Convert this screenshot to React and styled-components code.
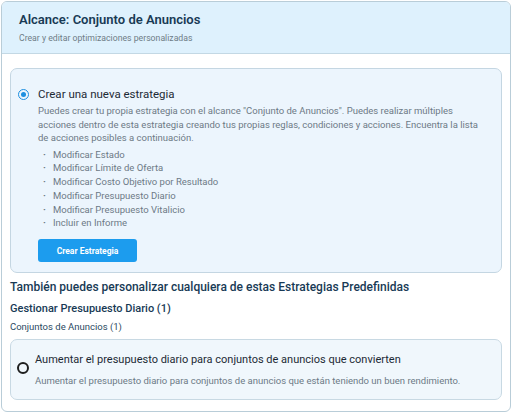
import React from "react"
import styled, { createGlobalStyle } from "styled-components"

const GlobalStyle = createGlobalStyle`
  html, body {
    margin: 0;
    padding: 0;
    background: #ffffff;
  }
  body {
    font-family: Roboto, "Noto Sans", "Liberation Sans", sans-serif;
  }
`

const Panel = styled.div`
  margin: 1px;
  width: 508px;
  height: 409px;
  border: 1px solid #b9cdd8;
  border-radius: 6px;
  overflow: hidden;
  background: #ffffff;
  display: flex;
  flex-direction: column;
`

const Header = styled.div`
  background: #def1fd;
  border-bottom: 1px solid #c3d8e4;
  padding: 9px 17px 0;
  height: 42px;
`

const Title = styled.h1`
  margin: 0;
  font-size: 13px;
  line-height: 17px;
  font-weight: 600;
  color: #183a55;
`

const Subtitle = styled.p`
  margin: 4px 0 0;
  font-size: 8.7px;
  line-height: 12px;
  color: #6f7d87;
`

const Body = styled.div`
  padding: 14px 8px 0;
  display: flex;
  flex-direction: column;
`

const Card = styled.div`
  background: ${(p) => (p.$active ? "#ecf5fd" : "#f0f7fc")};
  border: 1px solid ${(p) => (p.$active ? "#c4d6e2" : "#c8d9e3")};
  border-radius: 7px;
  padding: ${(p) => p.$pad};
  display: flex;
  gap: ${(p) => p.$gap};
`

const Radio = styled.span`
  flex: none;
  box-sizing: border-box;
  width: ${(p) => (p.$checked ? "11px" : "12px")};
  height: ${(p) => (p.$checked ? "11px" : "12px")};
  border-radius: 50%;
  border: ${(p) => (p.$checked ? "1.5px solid #1d8fe0" : "2px solid #1e1e1e")};
  margin-top: ${(p) => p.$top};
  display: flex;
  align-items: center;
  justify-content: center;
  &::after {
    content: "";
    display: ${(p) => (p.$checked ? "block" : "none")};
    width: 5px;
    height: 5px;
    border-radius: 50%;
    background: #1d8fe0;
  }
`

const Content = styled.div`
  flex: 1;
  min-width: 0;
`

const OptionTitle = styled.div`
  font-size: ${(p) => p.$size || "11.5px"};
  line-height: 14px;
  color: #1d2a35;
`

const Text = styled.p`
  margin: ${(p) => p.$margin || "0"};
  font-size: 9.5px;
  line-height: 13.5px;
  color: #6c7a86;
`

const List = styled.ul`
  list-style: none;
  margin: 3px 0 0;
  padding: 0 0 0 5px;
`

const Item = styled.li`
  font-size: 9.5px;
  line-height: 13.8px;
  color: #6c7a86;
  &::before {
    content: "·";
    display: inline-block;
    width: 10px;
    font-weight: 700;
  }
`

const Button = styled.button`
  margin-top: 9px;
  width: 99px;
  height: 23px;
  border: 0;
  border-radius: 3px;
  background: #1c9cee;
  color: #ffffff;
  font-family: inherit;
  font-size: 8.5px;
  font-weight: 700;
  cursor: pointer;
`

const SectionTitle = styled.h2`
  margin: 6px 0 0;
  font-size: 12px;
  line-height: 16px;
  font-weight: 500;
  color: #183a55;
`

const GroupTitle = styled.h3`
  margin: 7px 0 0;
  font-size: 11px;
  line-height: 14px;
  font-weight: 500;
  color: #183a55;
`

const GroupLabel = styled.div`
  margin: 4px 0 6px;
  font-size: 9.5px;
  line-height: 13px;
  color: #2b4a62;
`

const acciones = [
  "Modificar Estado",
  "Modificar Límite de Oferta",
  "Modificar Costo Objetivo por Resultado",
  "Modificar Presupuesto Diario",
  "Modificar Presupuesto Vitalicio",
  "Incluir en Informe",
]

export default function App() {
  return (
    <>
      <GlobalStyle />
      <Panel>
        <Header>
          <Title>Alcance: Conjunto de Anuncios</Title>
          <Subtitle>Crear y editar optimizaciones personalizadas</Subtitle>
        </Header>
        <Body>
          <Card $active $pad="18px 3px 10px 7px" $gap="9px">
            <Radio $checked $top="1.5px" />
            <Content>
              <OptionTitle>Crear una nueva estrategia</OptionTitle>
              <Text $margin="3px 0 0">
                Puedes crear tu propia estrategia con el alcance "Conjunto de Anuncios". Puedes realizar múltiples
                <br />
                acciones dentro de esta estrategia creando tus propias reglas, condiciones y acciones. Encuentra la lista
                <br />
                de acciones posibles a continuación.
              </Text>
              <List>
                {acciones.map((a) => (
                  <Item key={a}>{a}</Item>
                ))}
              </List>
              <Button>Crear Estrategia</Button>
            </Content>
          </Card>
          <SectionTitle>También puedes personalizar cualquiera de estas Estrategias Predefinidas</SectionTitle>
          <GroupTitle>Gestionar Presupuesto Diario (1)</GroupTitle>
          <GroupLabel>Conjuntos de Anuncios (1)</GroupLabel>
          <Card $pad="13px 12px 11px 6px" $gap="6px">
            <Radio $top="9px" />
            <Content>
              <OptionTitle $size="11px">
                Aumentar el presupuesto diario para conjuntos de anuncios que convierten
              </OptionTitle>
              <Text $margin="7px 0 0">
                Aumentar el presupuesto diario para conjuntos de anuncios que están teniendo un buen rendimiento.
              </Text>
            </Content>
          </Card>
        </Body>
      </Panel>
    </>
  )
}
